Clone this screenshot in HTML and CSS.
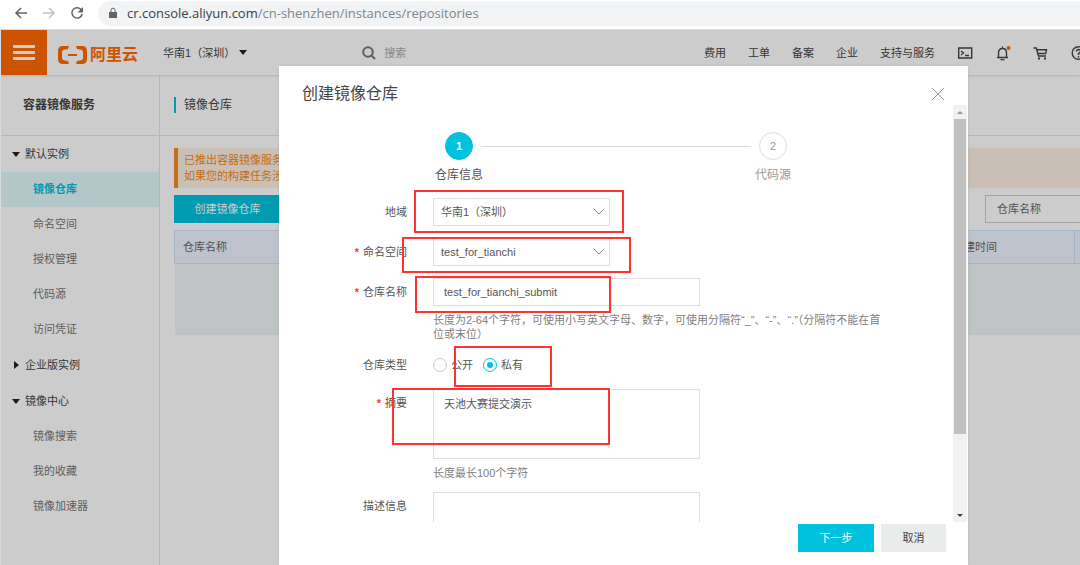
FILE: index.html
```html
<!DOCTYPE html>
<html lang="zh-CN">
<head>
    <meta charset="UTF-8">
    <title>镜像仓库</title>
    <meta name="viewport" content="width=device-width, initial-scale=1.0">
    <link rel="stylesheet" href="styles.css">
</head>
<body>
    <div class="browser">
        <button class="browser__button" aria-label="Back">
            <svg width="14" height="14" viewBox="0 0 14 14"><path d="M13 7H2M7 2L2 7l5 5"/></svg>
        </button>
        <button class="browser__button browser__button--off" aria-label="Forward">
            <svg width="14" height="14" viewBox="0 0 14 14"><path d="M1 7h11M7 2l5 5-5 5"/></svg>
        </button>
        <button class="browser__button" aria-label="Reload">
            <svg width="14" height="14" viewBox="0 0 14 14"><path d="M11.6 4.2A5.2 5.2 0 1 0 12.2 8"/><path class="fill" d="M13 1v5.4H7.6z"/></svg>
        </button>
        <div class="address">
            <svg class="address__lock" width="10" height="12" viewBox="0 0 10 12"><path d="M1 5h8v6H1z"/><path class="line" d="M3 5V3.2a2 2 0 0 1 4 0V5"/></svg>
            <span>cr.console.aliyun.com<span class="address__path">/cn-shenzhen/instances/repositories</span></span>
        </div>
    </div>

    <div class="app">
        <header class="header">
            <button class="header__menu" aria-label="菜单"><span></span><span></span><span></span></button>
            <a class="logo" href="#">
                <svg width="30" height="18" viewBox="0 0 30 18">
                    <path d="M11 0H5Q0 0 0 5v8q0 5 5 5h6l-1-3-4-.8Q4 13.800 4 12V6q0-1.800 2-2.200L10 3z"/>
                    <path d="M18 0h6q5 0 5 5v8q0 5-5 5h-6l1-3 4-.8q2-.4 2-2.200V6q0-1.800-2-2.200L19 3z"/>
                    <path d="M10 8h9v2h-9z"/>
                </svg>
                <span>阿里云</span>
            </a>
            <button class="region">华南1（深圳）<i class="caret"></i></button>
            <div class="search">
                <svg width="14" height="14" viewBox="0 0 14 14"><circle cx="6" cy="6" r="4.800"/><path d="M9.500 9.500L13 13"/></svg>
                <input type="text" placeholder="搜索" aria-label="搜索">
            </div>
            <nav class="links">
                <a href="#">费用</a>
                <a href="#">工单</a>
                <a href="#">备案</a>
                <a href="#">企业</a>
                <a href="#">支持与服务</a>
                <a href="#" aria-label="命令行"><svg width="16" height="16" viewBox="0 0 16 16"><path d="M1.700 3h13v10h-13zM4 6l2.500 2L4 10M8 10.500h4"/></svg></a>
                <a href="#" aria-label="消息"><svg width="16" height="16" viewBox="0 0 16 16"><path d="M2 12.500h11M3.500 12.500V8q0-4.500 4-4.500t4 4.500v4.500M7.500 3.500V1.500M5.500 14.600h4"/><circle class="dot" cx="13.500" cy="3" r="2"/></svg></a>
                <a href="#" aria-label="购物车"><svg width="16" height="16" viewBox="0 0 16 16"><path d="M.5 3h2.800L5.500 11H13M4 4.800h9.500L12.700 8.500H5"/><path class="fill" d="M5 12.500h2v2H5zM11 12.500h2v2h-2z"/></svg></a>
                <a href="#" aria-label="帮助"><svg width="16" height="16" viewBox="0 0 16 16"><circle cx="7.500" cy="8" r="6.300"/><path d="M5.500 6.500q0-2 2-2t2 2q0 1-2 2V10M7.500 11v1.500"/></svg></a>
            </nav>
        </header>

        <div class="content">
            <aside class="sidebar">
                <h1 class="sidebar__title">容器镜像服务</h1>
                <nav class="menu">
                    <button class="menu__group"><i class="caret"></i>默认实例</button>
                    <a class="menu__item menu__item--active" href="#">镜像仓库</a>
                    <a class="menu__item" href="#">命名空间</a>
                    <a class="menu__item" href="#">授权管理</a>
                    <a class="menu__item" href="#">代码源</a>
                    <a class="menu__item" href="#">访问凭证</a>
                    <button class="menu__group"><i class="caret caret--right"></i>企业版实例</button>
                    <button class="menu__group"><i class="caret"></i>镜像中心</button>
                    <a class="menu__item" href="#">镜像搜索</a>
                    <a class="menu__item" href="#">我的收藏</a>
                    <a class="menu__item" href="#">镜像加速器</a>
                </nav>
            </aside>

            <main class="main">
                <div class="main__head"><h2 class="main__title">镜像仓库</h2></div>
                <div class="main__body">
                    <div class="notice">已推出容器镜像服务<br>如果您的构建任务涉</div>
                    <div class="toolbar">
                        <button class="toolbar__create">创建镜像仓库</button>
                        <select class="toolbar__filter" aria-label="搜索条件"><option>仓库名称</option></select>
                    </div>
                    <table class="table">
                        <thead>
                            <tr><th>仓库名称</th><th class="table__time">创建时间</th><th class="table__last"></th></tr>
                        </thead>
                        <tbody>
                            <tr><td colspan="3"></td></tr>
                        </tbody>
                    </table>
                </div>
            </main>
        </div>

        <div class="overlay">
            <div class="modal" role="dialog" aria-labelledby="modal-title">
                <div class="modal__head">
                    <h2 id="modal-title" class="modal__title">创建镜像仓库</h2>
                    <button class="modal__close" aria-label="关闭">
                        <svg width="14" height="14" viewBox="0 0 14 14"><path d="M1 1l12 12M13 1L1 13"/></svg>
                    </button>
                </div>

                <div class="modal__body">
                    <form class="form" id="repo-form">
                        <div class="steps">
                            <div class="step step--active"><span class="step__number">1</span><span class="step__label">仓库信息</span></div>
                            <div class="steps__line"></div>
                            <div class="step"><span class="step__number">2</span><span class="step__label">代码源</span></div>
                        </div>

                        <div class="row">
                            <label class="row__label" for="region">地域</label>
                            <div class="row__field">
                                <div class="select">
                                    <select id="region"><option>华南1（深圳）</option></select>
                                    <svg width="12" height="8" viewBox="0 0 12 8"><path d="M1 1l5 5 5-5"/></svg>
                                </div>
                            </div>
                            <div class="mark mark--region"></div>
                        </div>

                        <div class="row">
                            <label class="row__label row__label--required" for="namespace">命名空间</label>
                            <div class="row__field">
                                <div class="select">
                                    <select id="namespace"><option>test_for_tianchi</option></select>
                                    <svg width="12" height="8" viewBox="0 0 12 8"><path d="M1 1l5 5 5-5"/></svg>
                                </div>
                            </div>
                            <div class="mark mark--namespace"></div>
                        </div>

                        <div class="row">
                            <label class="row__label row__label--required" for="name">仓库名称</label>
                            <div class="row__field">
                                <input class="input" id="name" type="text" value="test_for_tianchi_submit">
                                <p class="hint">长度为2-64个字符，可使用小写英文字母、数字，可使用分隔符“_”、“-”、“.”（分隔符不能在首位或末位）</p>
                            </div>
                            <div class="mark mark--name"></div>
                        </div>

                        <div class="row row--radios" role="radiogroup" aria-labelledby="type-label">
                            <span class="row__label" id="type-label">仓库类型</span>
                            <div class="row__field radios">
                                <label class="radio"><input type="radio" name="type">公开</label>
                                <label class="radio"><input type="radio" name="type" checked>私有</label>
                            </div>
                            <div class="mark mark--type"></div>
                        </div>

                        <div class="row">
                            <label class="row__label row__label--required" for="summary">摘要</label>
                            <div class="row__field">
                                <textarea class="input input--area" id="summary">天池大赛提交演示</textarea>
                                <p class="hint">长度最长100个字符</p>
                            </div>
                            <div class="mark mark--summary"></div>
                        </div>

                        <div class="row">
                            <label class="row__label" for="description">描述信息</label>
                            <div class="row__field">
                                <textarea class="input input--area" id="description"></textarea>
                            </div>
                        </div>
                    </form>

                    <div class="scrollbar" aria-hidden="true">
                        <span class="scrollbar__arrow"><i class="scrollbar__up"></i></span>
                        <div class="scrollbar__track"><div class="scrollbar__thumb"></div></div>
                        <span class="scrollbar__arrow"><i class="scrollbar__down"></i></span>
                    </div>
                </div>

                <div class="modal__foot">
                    <button class="button button--primary" form="repo-form">下一步</button>
                    <button class="button" type="button">取消</button>
                </div>
            </div>
        </div>
    </div>
</body>
</html>
```

FILE: styles.css
```css
* {
    box-sizing: border-box;
}

body {
    display: flex;
    flex-direction: column;
    height: 100vh;
    margin: 0;
    overflow: hidden;
    color: #444;
    font-family: "Liberation Sans", "Noto Sans CJK SC", sans-serif;
    font-size: 11px;
    line-height: 16px;
}

h1, h2, p {
    margin: 0;
    font-weight: normal;
}

a {
    color: inherit;
    text-decoration: none;
}

button, input, select, textarea {
    margin: 0;
    padding: 0;
    border: 0;
    border-radius: 0;
    background: none;
    color: inherit;
    font: inherit;
}

svg {
    display: block;
    flex: none;
    fill: none;
    stroke: currentColor;
}

.caret {
    border: 4px solid transparent;
    border-top: 5px solid #222;
    border-bottom: 0;
}

.caret--right {
    margin: 0 1px 0 2px;
    border: 4px solid transparent;
    border-left: 5px solid #222;
    border-right: 0;
}

/* browser bar */

.browser {
    display: flex;
    flex: none;
    align-items: center;
    gap: 14px;
    height: 30px;
    padding: 0 0 3px 14px;
    background: #fff;
    border-bottom: 1px solid #dadce0;
}

.browser__button {
    color: #5f6368;
}

.browser__button svg {
    stroke-width: 1.5;
}

.browser__button .fill {
    fill: currentColor;
    stroke: none;
}

.browser__button--off {
    color: #bdc1c6;
}

.address {
    display: flex;
    flex: 1;
    align-items: center;
    gap: 9px;
    height: 25px;
    padding-left: 10px;
    background: #f1f3f4;
    border-radius: 13px 0 0 13px;
    color: #3c4043;
    font-family: "Open Sans", sans-serif;
    font-size: 13px;
}

.address__lock {
    color: #5f6368;
    fill: currentColor;
    stroke: none;
}

.address__lock .line {
    fill: none;
    stroke: currentColor;
}

.address__path {
    color: #80868b;
}

/* console page */

.app {
    position: relative;
    display: flex;
    flex: 1;
    flex-direction: column;
    min-height: 0;
    overflow: hidden;
    border-left: 1px solid #d5dde3;
}

.header {
    display: flex;
    flex: none;
    align-items: center;
    height: 45px;
    box-shadow: 0 1px 2px #ddd;
}

.header__menu {
    display: flex;
    flex-direction: column;
    align-items: center;
    justify-content: center;
    gap: 3px;
    width: 46px;
    height: 100%;
    background: #ff6a00;
}

.header__menu span {
    width: 22px;
    height: 3px;
    background: #fff;
}

.logo {
    display: flex;
    align-items: center;
    gap: 2px;
    margin-left: 11px;
    padding-top: 5px;
    color: #ff6a00;
    font-size: 16px;
    font-weight: bold;
}

.logo svg {
    fill: currentColor;
    stroke: none;
}

.region {
    display: flex;
    align-items: center;
    gap: 4px;
    margin-left: 25px;
}

.search {
    display: flex;
    flex: 0 1 200px;
    align-items: center;
    gap: 8px;
    margin-left: 115px;
    color: #777;
}

.search svg {
    stroke-width: 2;
}

.search input {
    min-width: 0;
}

.search input::placeholder {
    color: #aaa;
}

.links {
    display: flex;
    flex: none;
    align-items: center;
    gap: 22px;
    margin: 0 -7px 0 auto;
}

.links svg {
    stroke-width: 1.4;
}

.links .fill {
    fill: currentColor;
    stroke: none;
}

.links .dot {
    fill: #ff6a00;
    stroke: none;
}

.content {
    display: flex;
    flex: 1;
}

.sidebar {
    flex: none;
    width: 159px;
    border-right: 1px solid #e4e4e4;
}

.sidebar__title {
    height: 61px;
    padding-left: 22px;
    border-bottom: 1px solid #e4e4e4;
    font-size: 12px;
    font-weight: bold;
    line-height: 60px;
}

.menu {
    display: flex;
    flex-direction: column;
}

.menu__group {
    display: flex;
    align-items: center;
    gap: 5px;
    height: 36px;
    padding-left: 11px;
}

.menu__item {
    height: 35px;
    padding-left: 32px;
    color: #777;
    line-height: 35px;
}

.menu__item--active {
    background: #e2f9fb;
    color: #00c1de;
    font-weight: bold;
}

.main {
    flex: 1;
    min-width: 0;
}

.main__head {
    display: flex;
    align-items: center;
    height: 61px;
    padding-left: 14px;
    border-bottom: 1px solid #e4e4e4;
}

.main__title {
    padding-left: 8px;
    border-left: 2px solid #00c1de;
    font-size: 12px;
}

.main__body {
    display: flex;
    flex-direction: column;
    gap: 7px;
    padding: 12px 0 0 14px;
}

.notice {
    padding: 4px 6px;
    background: #fdefe3;
    border-left: 4px solid #f68a20;
    color: #f68a20;
}

.toolbar {
    display: flex;
    justify-content: space-between;
}

.toolbar__create {
    width: 107px;
    height: 28px;
    background: #00c1de;
    color: #fff;
}

.toolbar__filter {
    appearance: none;
    width: 95px;
    height: 28px;
    padding-left: 11px;
    border: 1px solid #ccc;
    border-right: 0;
    color: #666;
}

.table {
    width: 100%;
    border-collapse: collapse;
    table-layout: fixed;
    color: #666;
    text-align: left;
}

.table th {
    height: 33px;
    padding: 0 8px;
    background: #eef3ff;
    border: 1px solid #d0e2fb;
    border-width: 1px 0 1px 1px;
    font-weight: normal;
}

.table .table__time {
    width: 129px;
    border-left: 0;
}

.table .table__last {
    width: 6px;
    padding: 0;
}

.table td {
    height: 71px;
    background: #f1f4f6;
}

/* dialog */

.overlay {
    position: absolute;
    inset: 0;
    display: flex;
    padding: 36px 112px 0 278px;
    background: rgba(0, 0, 0, 0.2);
}

.modal {
    display: flex;
    flex: 1;
    flex-direction: column;
    min-width: 0;
    background: #fff;
    box-shadow: 0 0 3px rgba(0, 0, 0, 0.1);
}

.modal__head {
    display: flex;
    flex: none;
    align-items: center;
    justify-content: space-between;
    height: 39px;
    padding: 17px 23px 0;
}

.modal__title {
    font-size: 16px;
}

.modal__close {
    color: #999;
}

.modal__body {
    display: flex;
    flex: 1;
    min-height: 0;
}

.form {
    display: flex;
    flex: 1;
    flex-direction: column;
    gap: 12px;
    min-width: 0;
    overflow: hidden;
    padding-top: 27px;
}

.steps {
    display: flex;
    flex: none;
    gap: 8px;
    height: 54px;
    padding: 0 166px;
}

.steps__line {
    flex: 1;
    height: 1px;
    margin-top: 14px;
    background: #d8d8d8;
}

.step {
    display: flex;
    flex-direction: column;
    align-items: center;
    gap: 7px;
    width: 28px;
    color: #999;
    white-space: nowrap;
}

.step__number {
    width: 28px;
    height: 28px;
    border: 1px solid #ddd;
    border-radius: 50%;
    line-height: 26px;
    text-align: center;
}

.step__label {
    font-size: 12px;
}

.step--active {
    color: #555;
}

.step--active .step__number {
    background: #00c1de;
    border-color: #00c1de;
    color: #fff;
    font-weight: bold;
}

.row {
    position: relative;
    display: flex;
    flex: none;
    gap: 26px;
    color: #555;
}

.row__label {
    width: 128px;
    line-height: 28px;
    text-align: right;
}

.row__label--required::before {
    content: "*";
    margin-right: 4px;
    color: #f33;
    font-weight: bold;
}

.row__field {
    flex: 1;
}

.row--radios .row__label {
    line-height: 24px;
}

.select {
    position: relative;
    width: 177px;
}

.select select {
    display: block;
    appearance: none;
    width: 100%;
    height: 28px;
    padding: 0 24px 0 7px;
    border: 1px solid #ddd;
}

.select svg {
    position: absolute;
    top: 10px;
    right: 5px;
    color: #888;
    pointer-events: none;
}

.input {
    display: block;
    width: 267px;
    height: 28px;
    padding: 0 10px;
    border: 1px solid #ddd;
}

.input--area {
    height: 70px;
    padding: 6px 10px;
    resize: none;
}

.hint {
    max-width: 452px;
    margin-top: 7px;
    color: #808080;
    line-height: 14px;
}

.radios {
    display: flex;
    gap: 10px;
    height: 24px;
}

.radio {
    display: flex;
    align-items: center;
    gap: 4px;
}

.radio input {
    appearance: none;
    width: 14px;
    height: 14px;
    padding: 3px;
    border: 1px solid #ccc;
    border-radius: 50%;
}

.radio input:checked {
    background: #00c1de content-box;
    border-color: #00c1de;
}

/* red frames round the fields to fill in */

.mark {
    position: absolute;
    border: 2px solid #ff3232;
    pointer-events: none;
}

.mark--region {
    top: -8px;
    left: 135px;
    width: 210px;
    height: 43px;
}

.mark--namespace {
    top: -1px;
    left: 123px;
    width: 229px;
    height: 36px;
}

.mark--name {
    top: -2px;
    left: 136px;
    width: 196px;
    height: 37px;
}

.mark--type {
    top: -7px;
    left: 175px;
    width: 98px;
    height: 41px;
}

.mark--summary {
    top: -1px;
    left: 113px;
    width: 218px;
    height: 57px;
}

.scrollbar {
    display: flex;
    flex: none;
    flex-direction: column;
    width: 14px;
    margin-right: 1px;
    background: #f1f1f1;
}

.scrollbar__arrow {
    display: flex;
    align-items: center;
    justify-content: center;
    height: 14px;
}

.scrollbar__up,
.scrollbar__down {
    border: 3px solid transparent;
}

.scrollbar__up {
    border-top: 0;
    border-bottom-color: #999;
}

.scrollbar__down {
    border-top-color: #444;
    border-bottom: 0;
}

.scrollbar__track {
    flex: 1;
    padding: 0 1px;
}

.scrollbar__thumb {
    height: 81%;
    background: #c1c1c1;
}

.modal__foot {
    display: flex;
    flex: none;
    justify-content: flex-end;
    gap: 7px;
    padding: 2px 22px 13px;
}

.button {
    width: 65px;
    height: 28px;
    background: #eaebeb;
}

.button--primary {
    width: 76px;
    background: #00c1de;
    color: #fff;
}
```
